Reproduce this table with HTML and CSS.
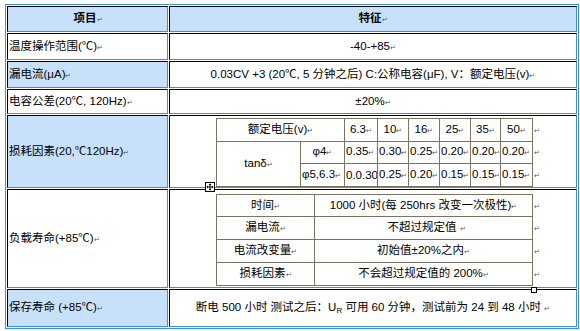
FILE: index.html
```html
<!DOCTYPE html>
<html lang="zh">
<head>
<meta charset="utf-8">
<title>规格</title>
<link rel="stylesheet" href="styles.css">
</head>
<body>
<table class="spec">
  <tr class="r-head">
    <td class="lc shade hd">项目<span class="pm">↵</span></td>
    <td class="rc shade hd">特征<span class="pm">↵</span></td>
  </tr>
  <tr class="r-std">
    <td class="lc">温度操作范围(℃)<span class="pm">↵</span></td>
    <td class="rc">-40-+85<span class="pm">↵</span></td>
  </tr>
  <tr class="r-std">
    <td class="lc shade">漏电流(μA)<span class="pm">↵</span></td>
    <td class="rc">0.03CV +3 (20℃, 5 分钟之后) C:公称电容(μF), V：额定电压(v)<span class="pm">↵</span></td>
  </tr>
  <tr class="r-tol">
    <td class="lc">电容公差(20℃, 120Hz)<span class="pm">↵</span></td>
    <td class="rc">±20%<span class="pm">↵</span></td>
  </tr>
  <tr class="r-tan">
    <td class="lc shade">损耗因素(20,℃120Hz)<span class="pm">↵</span></td>
    <td class="rc">
      <table class="tb tb1">
        <colgroup>
          <col class="w84"><col class="w44"><col class="w33"><col class="w31"><col class="w31"><col class="w31"><col class="w30"><col class="w32"><col class="wmk">
        </colgroup>
        <tr class="h23">
          <td colspan="2">额定电压(v)<span class="pm">↵</span></td>
          <td>6.3<span class="pm">↵</span></td>
          <td>10<span class="pm">↵</span></td>
          <td>16<span class="pm">↵</span></td>
          <td>25<span class="pm">↵</span></td>
          <td>35<span class="pm">↵</span></td>
          <td>50<span class="pm">↵</span></td>
          <td class="mk"><span class="pm">↵</span></td>
        </tr>
        <tr class="h22">
          <td rowspan="2">tanδ<span class="pm">↵</span></td>
          <td>φ4<span class="pm">↵</span></td>
          <td class="val">0.35<span class="pm">↵</span></td>
          <td class="val">0.30<span class="pm">↵</span></td>
          <td class="val">0.25<span class="pm">↵</span></td>
          <td class="val">0.20<span class="pm">↵</span></td>
          <td class="val">0.20<span class="pm">↵</span></td>
          <td class="val">0.20<span class="pm">↵</span></td>
          <td class="mk"><span class="pm">↵</span></td>
        </tr>
        <tr class="h23">
          <td class="val">φ5,6.3<span class="pm">↵</span></td>
          <td class="val">0.0.30</td>
          <td class="val">0.25<span class="pm">↵</span></td>
          <td class="val">0.20<span class="pm">↵</span></td>
          <td class="val">0.15<span class="pm">↵</span></td>
          <td class="val">0.15<span class="pm">↵</span></td>
          <td class="val">0.15<span class="pm">↵</span></td>
          <td class="mk"><span class="pm">↵</span></td>
        </tr>
      </table>
    </td>
  </tr>
  <tr class="r-life">
    <td class="lc">负载寿命(+85℃)<span class="pm">↵</span></td>
    <td class="rc">
      <div class="nest">
        <span class="move-handle" aria-hidden="true">
          <svg width="10" height="10" viewBox="0 0 10 10">
            <rect x="0.5" y="0.5" width="9" height="9" fill="#fff" stroke="#000"/>
            <path d="M5 2v6M2 5h6" stroke="#000" stroke-width="1"/>
            <path d="M5 1.5l-1.5 1.5h3zM5 8.5l-1.5-1.5h3zM1.5 5l1.5-1.5v3zM8.5 5l-1.5-1.5v3z" fill="#000"/>
          </svg>
        </span>
        <table class="tb tb2">
          <colgroup><col class="w98"><col class="w218"><col class="wmk"></colgroup>
          <tr class="h22">
            <td>时间<span class="pm">↵</span></td>
            <td>1000 小时(每 250hrs 改变一次极性)<span class="pm">↵</span></td>
            <td class="mk"><span class="pm">↵</span></td>
          </tr>
          <tr class="h23">
            <td>漏电流<span class="pm">↵</span></td>
            <td>&nbsp;&nbsp;不超过规定值 <span class="pm">↵</span></td>
            <td class="mk"><span class="pm">↵</span></td>
          </tr>
          <tr class="h23">
            <td>电流改变量<span class="pm">↵</span></td>
            <td>初始值±20%之内<span class="pm">↵</span></td>
            <td class="mk"><span class="pm">↵</span></td>
          </tr>
          <tr class="h23">
            <td>损耗因素<span class="pm">↵</span></td>
            <td>不会超过规定值的 200%<span class="pm">↵</span></td>
            <td class="mk"><span class="pm">↵</span></td>
          </tr>
        </table>
        <span class="size-handle" aria-hidden="true"></span>
      </div>
    </td>
  </tr>
  <tr class="r-store">
    <td class="lc shade">保存寿命 (+85℃)<span class="pm">↵</span></td>
    <td class="rc">断电 500 小时 测试之后：U<sub>R</sub> 可用 60 分钟，测试前为 24 到 48 小时 <span class="pm">↵</span></td>
  </tr>
</table>
</body>
</html>
```
FILE: styles.css
```css
html, body {
  margin: 0;
  padding: 0;
  background: #fff;
}
body {
  font-family: "Liberation Sans", "Noto Sans CJK SC", sans-serif;
  font-size: 11.5px;
  color: #000;
}

.spec {
  margin: 4px 0 0 5px;
  width: 574px;
  border: 1px solid #3d8ee8;
  border-collapse: separate;
  border-spacing: 1px;
  table-layout: fixed;
}
.spec > tbody > tr > td {
  border-style: solid;
  border-width: 1px;
  border-color: #000 #3d8ee8 #3d8ee8 #000;
  padding: 0;
  vertical-align: middle;
  white-space: nowrap;
  line-height: 14px;
}
.spec td.lc {
  width: 158px;
  padding-left: 1px;
  text-align: left;
}
.spec td.rc {
  text-align: center;
}
.spec td.shade {
  background: #c8e1fb;
}
.spec td.hd {
  font-weight: bold;
  text-align: center;
}
.r-head > td { height: 24px; }
.r-std > td { height: 25px; }
.r-tol > td { height: 23px; }
.r-tan > td { height: 71px; }
.r-life > td { height: 97px; }
.r-store > td { height: 36px; }

.pm {
  font-size: 7px;
  color: #555;
  font-weight: normal;
}

sub {
  font-size: 8px;
  vertical-align: -2px;
  line-height: 0;
}

/* nested tables */
.tb {
  border-collapse: collapse;
  table-layout: fixed;
  margin-left: 46px;
}
.tb td {
  border: 1px solid #7a7460;
  padding: 0;
  text-align: center;
  vertical-align: middle;
  white-space: nowrap;
  overflow: hidden;
  line-height: 14px;
}
.tb td.val {
  text-align: left;
  padding-left: 1px;
}
.tb td.mk {
  border: none;
  text-align: left;
  padding-left: 1px;
}
.tb1 { width: 326px; margin-top: 1px; }
.tb2 { width: 326px; margin-left: 0; }

.w84 { width: 84px; }
.w44 { width: 44px; }
.w33 { width: 33px; }
.w31 { width: 31px; }
.w30 { width: 30px; }
.w32 { width: 32px; }
.w98 { width: 98px; }
.w218 { width: 218px; }
.wmk { width: 10px; }

.h22 { height: 22px; }
.h23 { height: 23px; }

.nest {
  position: relative;
  width: 326px;
  margin: 3px 0 0 46px;
}
.move-handle {
  position: absolute;
  left: -11px;
  top: -12px;
  width: 10px;
  height: 10px;
  line-height: 0;
}
.size-handle {
  position: absolute;
  left: 315px;
  bottom: -7px;
  width: 4px;
  height: 4px;
  border: 1px solid #000;
  background: #fff;
}
```
